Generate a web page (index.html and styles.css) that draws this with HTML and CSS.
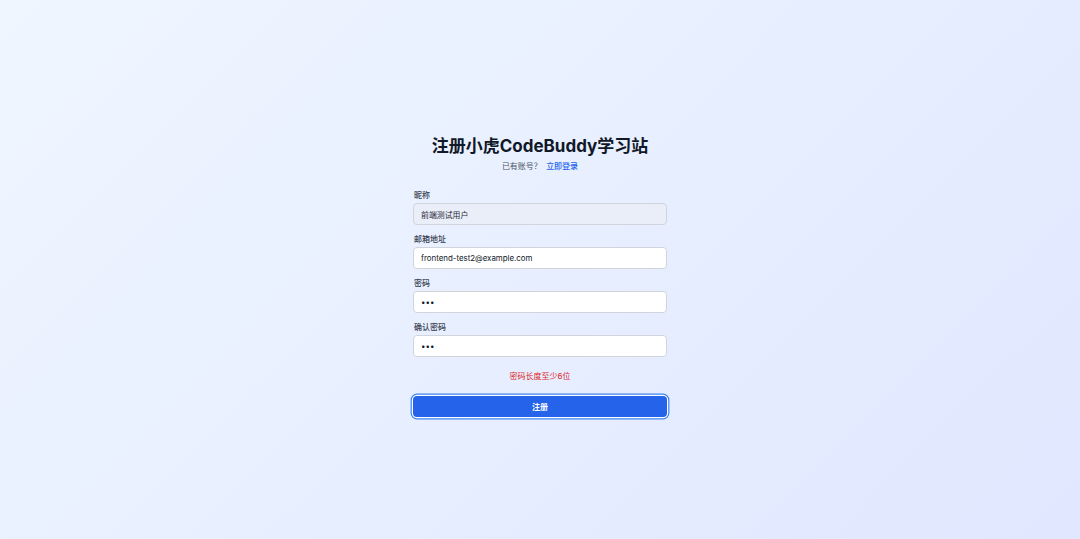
FILE: index.html
```html
<!DOCTYPE html>
<html lang="zh-CN">
<head>
<meta charset="utf-8">
<title>注册小虎CodeBuddy学习站</title>
<link rel="stylesheet" href="styles.css">
</head>
<body>
<main class="page">
  <section class="card">
    <h1 class="title">注册小虎CodeBuddy学习站</h1>
    <p class="subtitle">已有账号？ <a class="link" href="#">立即登录</a></p>
    <form class="form">
      <div class="field">
        <label class="label">昵称</label>
        <input class="input input-disabled" type="text" value="前端测试用户" readonly>
      </div>
      <div class="field">
        <label class="label">邮箱地址</label>
        <input class="input" type="email" value="frontend-test2@example.com">
      </div>
      <div class="field">
        <label class="label">密码</label>
        <input class="input" type="password" value="123">
      </div>
      <div class="field">
        <label class="label">确认密码</label>
        <input class="input" type="password" value="123">
      </div>
      <p class="error">密码长度至少6位</p>
      <button class="button" type="button">注册</button>
    </form>
  </section>
</main>
</body>
</html>
```
FILE: styles.css
```css
* { box-sizing: border-box; }
html, body { margin: 0; padding: 0; height: 100%; }
body {
  font-family: Inter, "Noto Sans CJK SC", sans-serif;
  background: linear-gradient(135deg, #eff6ff 0%, #e0e7ff 100%);
  color: #111827;
}
.page {
  min-height: 539px;
  display: flex;
  justify-content: center;
  padding-top: 135px;
}
.card {
  width: 254px;
  display: flex;
  flex-direction: column;
}
.title {
  margin: 0;
  font-size: 17px;
  line-height: 22px;
  font-weight: 700;
  text-align: center;
  color: #111827;
}
.subtitle {
  margin: 3px 0 0;
  font-size: 8px;
  line-height: 12px;
  text-align: center;
  color: #4b5563;
}
.link {
  color: #2563eb;
  text-decoration: none;
  font-weight: 500;
  margin-left: 2px;
}
.form {
  margin-top: 17px;
  display: flex;
  flex-direction: column;
}
.field {
  display: flex;
  flex-direction: column;
  margin-bottom: 8px;
}
.label {
  font-size: 8px;
  line-height: 12px;
  font-weight: 500;
  color: #374151;
  margin-bottom: 2px;
  padding-left: 1px;
}
.input {
  height: 22px;
  border: 1px solid #d1d5db;
  border-radius: 4px;
  background: #ffffff;
  padding: 0 7px;
  font-family: Inter, "Noto Sans CJK SC", sans-serif;
  font-size: 7.9px;
  color: #111827;
  outline: none;
}
.input-disabled {
  background: #eaeef8;
  color: #1f2937;
}
.error {
  margin: 5px 0 0;
  font-size: 8px;
  line-height: 12px;
  text-align: center;
  color: #dc2626;
}
.button {
  margin-top: 14px;
  height: 21px;
  border: none;
  border-radius: 4px;
  background: #2563eb;
  color: #ffffff;
  font-family: Inter, "Noto Sans CJK SC", sans-serif;
  font-size: 8px;
  font-weight: 600;
  box-shadow: 0 0 0 1.2px #ffffff, 0 0 0 2.4px #3b82f6;
}
```
